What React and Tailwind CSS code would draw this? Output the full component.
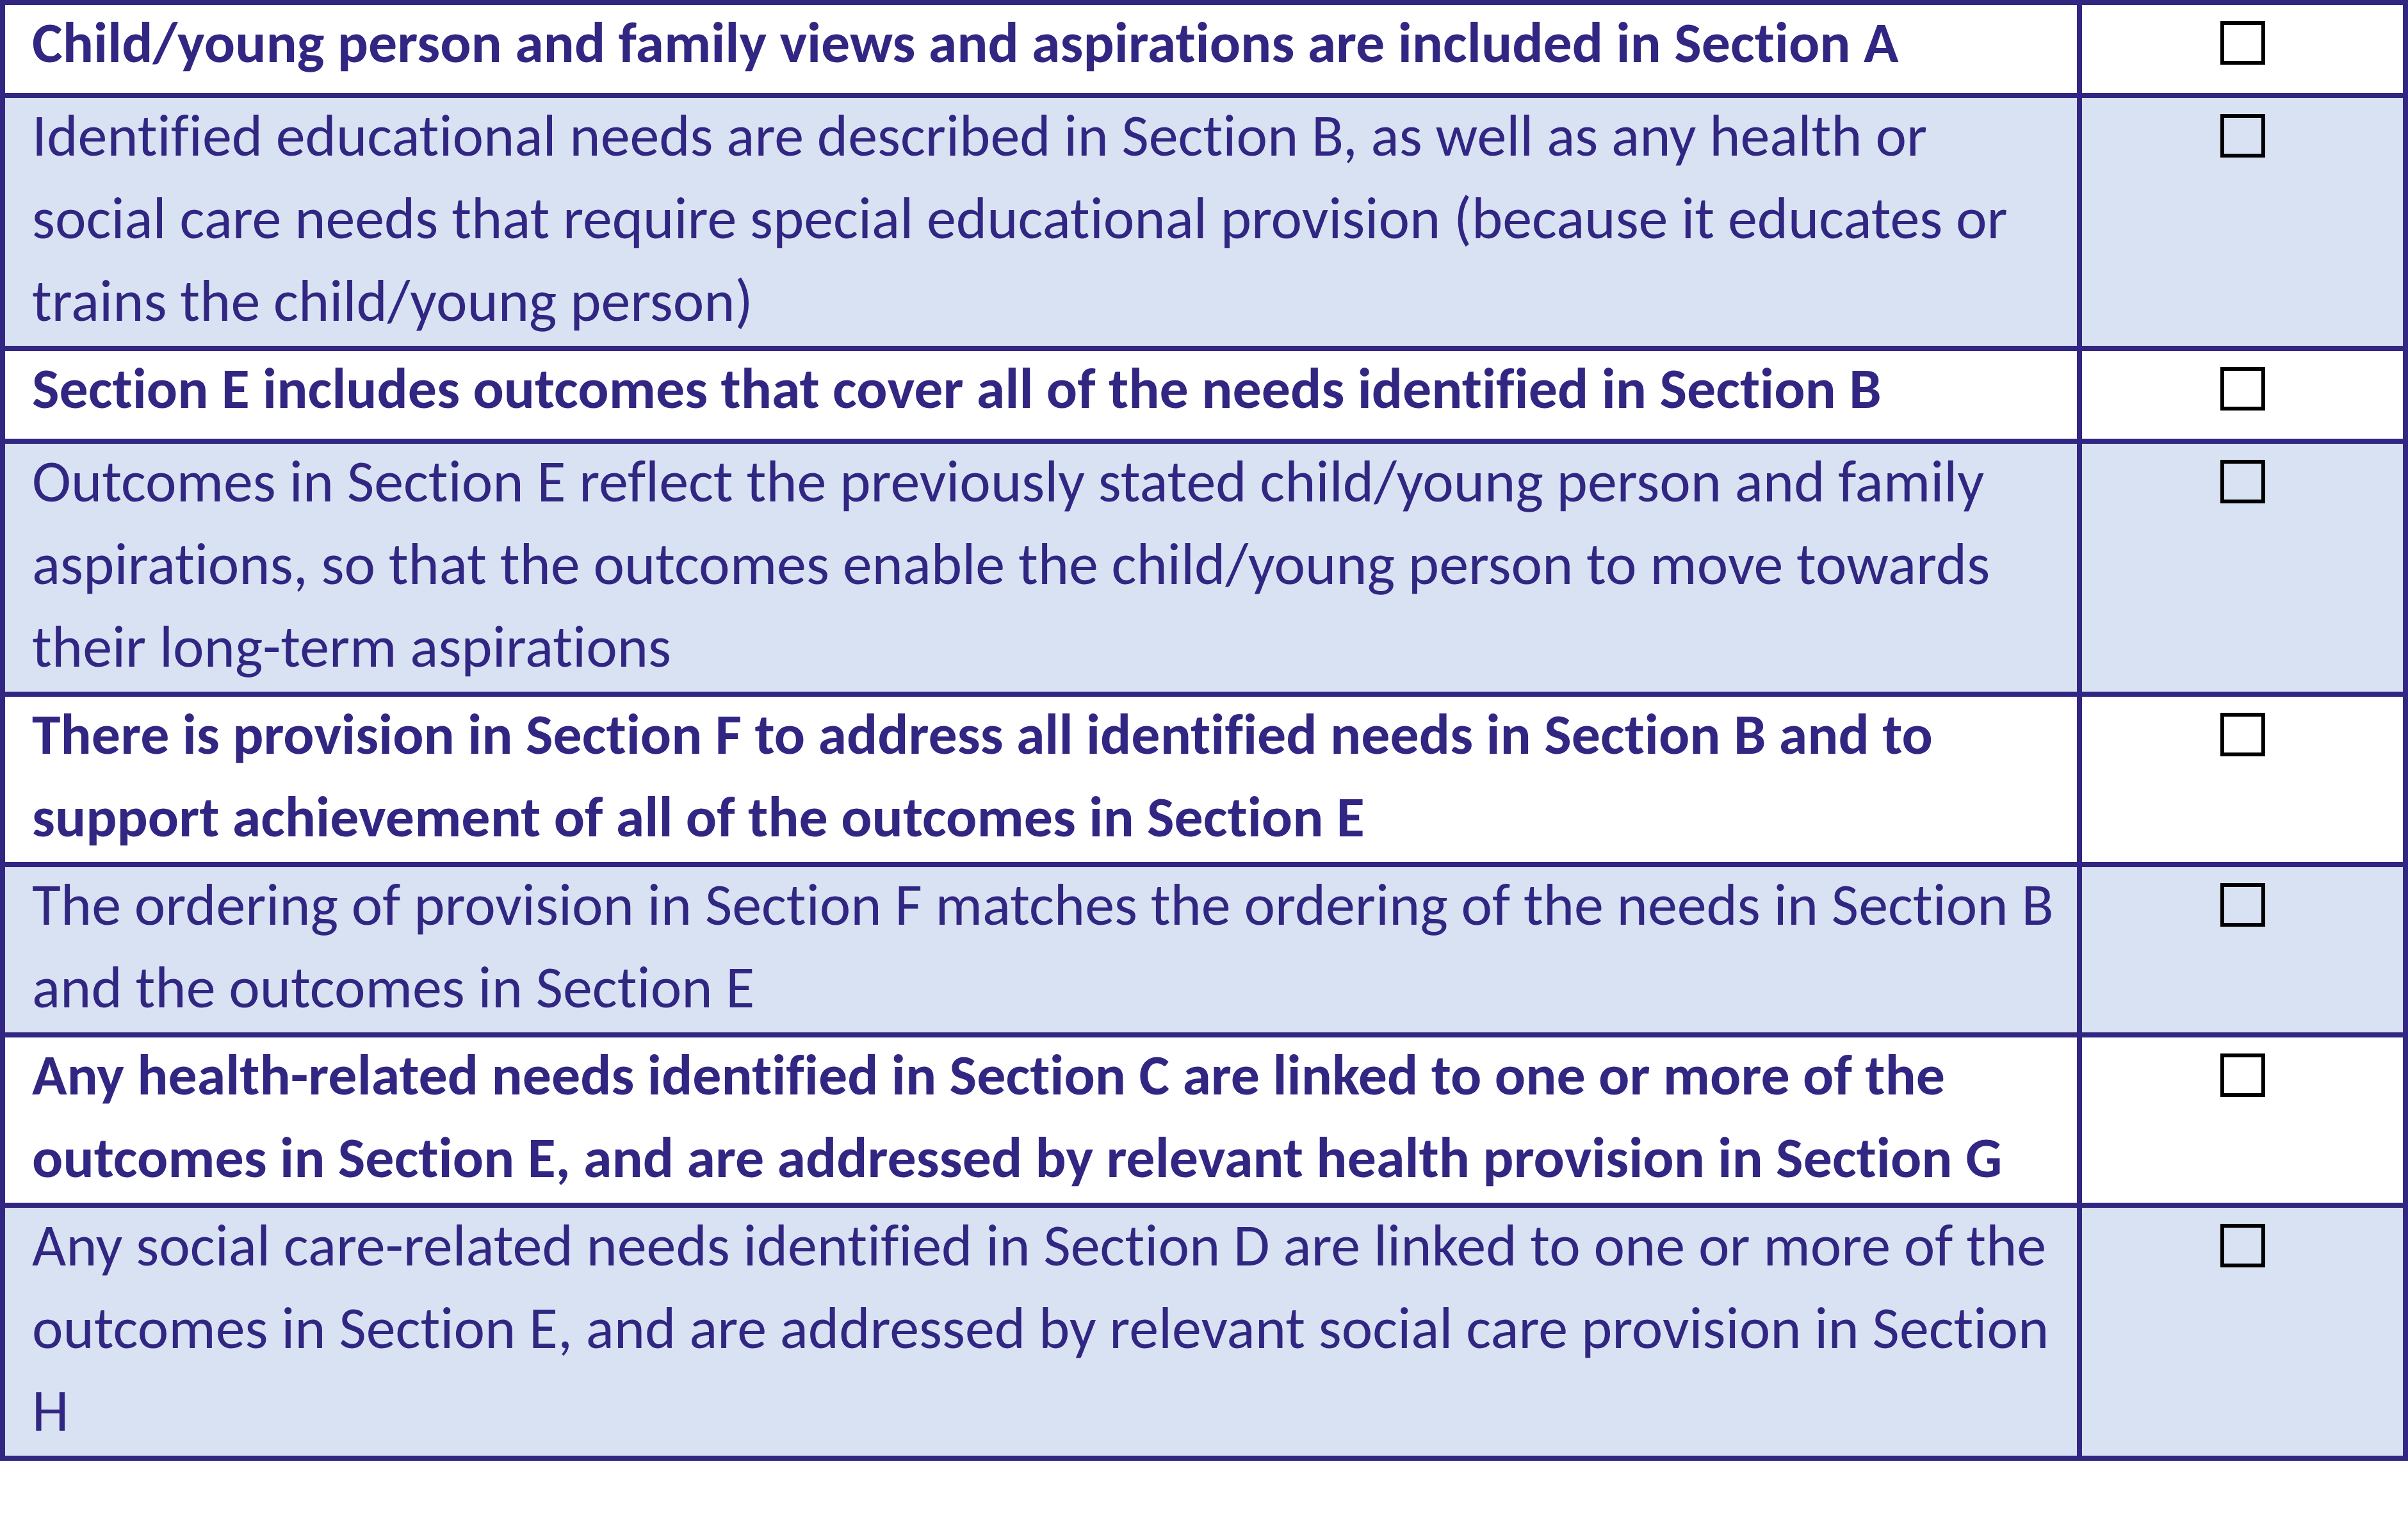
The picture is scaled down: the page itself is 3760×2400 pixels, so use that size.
const rows = [
  { bold: true, lines: ['Child/young person and family views and aspirations are included in Section A'] },
  {
    bold: false,
    lines: [
      'Identified educational needs are described in Section B, as well as any health or',
      'social care needs that require special educational provision (because it educates or',
      'trains the child/young person)',
    ],
  },
  { bold: true, lines: ['Section E includes outcomes that cover all of the needs identified in Section B'] },
  {
    bold: false,
    lines: [
      'Outcomes in Section E reflect the previously stated child/young person and family',
      'aspirations, so that the outcomes enable the child/young person to move towards',
      'their long-term aspirations',
    ],
  },
  {
    bold: true,
    lines: [
      'There is provision in Section F to address all identified needs in Section B and to',
      'support achievement of all of the outcomes in Section E',
    ],
  },
  {
    bold: false,
    lines: [
      'The ordering of provision in Section F matches the ordering of the needs in Section B',
      'and the outcomes in Section E',
    ],
  },
  {
    bold: true,
    lines: [
      'Any health-related needs identified in Section C are linked to one or more of the',
      'outcomes in Section E, and are addressed by relevant health provision in Section G',
    ],
  },
  {
    bold: false,
    lines: [
      'Any social care-related needs identified in Section D are linked to one or more of the',
      'outcomes in Section E, and are addressed by relevant social care provision in Section',
      'H',
    ],
  },
];

function Row({ row, shaded }) {
  const bg = shaded ? 'bg-[#d9e2f3]' : 'bg-white';
  return (
    <>
      <div className={`${bg} min-h-[137px] pb-[6px] pl-[42px] pr-[20px] text-[#312783] [font-variant-ligatures:none]`}>
        <div
          className={`-mt-[6px] leading-[129px] ${
            row.bold ? 'text-[90px] font-bold' : 'text-[92px] font-normal'
          }`}
        >
          {row.lines.map((l, i) => (
            <div key={i} className="whitespace-nowrap">
              {l}
            </div>
          ))}
        </div>
      </div>
      <div className={`${bg} flex justify-center pt-[25px]`}>
        <div className="h-[68px] w-[70px] border-[6px] border-black" />
      </div>
    </>
  );
}

export default function App() {
  return (
    <div className="min-h-[2400px] bg-white font-['Carlito','Liberation_Sans',sans-serif]">
      <div className="grid w-[3760px] grid-cols-[3235px_501px] gap-2 bg-[#312783] p-2">
        {rows.map((r, i) => (
          <Row key={i} row={r} shaded={i % 2 === 1} />
        ))}
      </div>
    </div>
  );
}
